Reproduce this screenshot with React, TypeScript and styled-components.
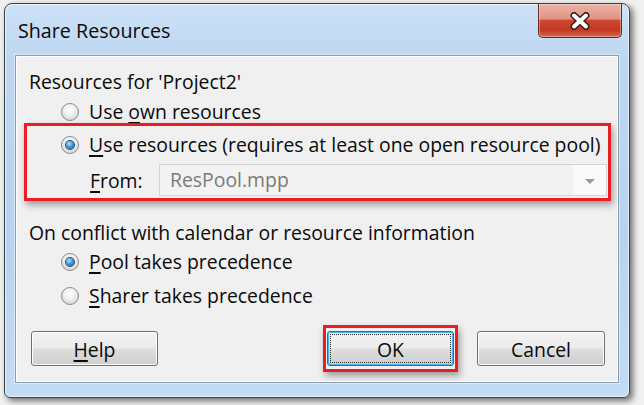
import React from "react";
import styled, { createGlobalStyle } from "styled-components";

const GlobalStyle = createGlobalStyle`
  html, body {
    margin: 0;
    padding: 0;
  }
  body {
    background: #eeeeee;
    font-family: "Open Sans", "Noto Sans", Arial, sans-serif;
  }
  #root {
    width: 644px;
    height: 405px;
    overflow: hidden;
  }
`;

const Desktop = styled.div`
  width: 644px;
  height: 405px;
  box-sizing: border-box;
  padding: 3px 0 0 4px;
  background: #f1f1f1;
`;

const Window = styled.div`
  box-sizing: border-box;
  width: 626px;
  height: 395px;
  display: flex;
  flex-direction: column;
  padding: 0 10px 14px;
  border: 1px solid #3c4146;
  border-radius: 8px 8px 6px 6px;
  background: linear-gradient(180deg, #cde2f7 0%, #bdd7f1 14%, #b8d3ef 60%, #c3dcf5 100%);
  box-shadow: inset 0 0 0 1px rgba(255, 255, 255, 0.6), 3px 3px 6px rgba(0, 0, 0, 0.55);
`;

const TitleBar = styled.div`
  display: flex;
  align-items: flex-start;
  height: 51px;
  margin: 0 -10px;
  padding: 0 7px 0 13px;
`;

const Title = styled.div`
  align-self: center;
  margin-top: 1px;
  font-size: 19.7px;
  color: #0a0a0a;
`;

const CloseButton = styled.div`
  margin-left: auto;
  width: 84px;
  height: 34px;
  box-sizing: border-box;
  display: flex;
  align-items: center;
  justify-content: center;
  border: 1px solid #6b261b;
  border-top: none;
  border-radius: 0 0 5px 5px;
  background: linear-gradient(180deg, #ebb3a6 0%, #e19484 45%, #cb472f 50%, #c13a23 80%, #d66a52 100%);
  box-shadow: inset 0 0 0 1px rgba(255, 255, 255, 0.35);
`;

const Panel = styled.div`
  flex: 1;
  display: flex;
  flex-direction: column;
  border: 1px solid #8b9db3;
  background: #f0f0f0;
  box-shadow: 0 0 0 1px rgba(255, 255, 255, 0.45), inset 0 0 0 1px #ffffff;
  padding: 15px 7px 0 8px;
  font-size: 19.4px;
  color: #0a0a0a;
`;

const GroupLabel = styled.div<{ $top?: number }>`
  height: 22px;
  line-height: 22px;
  margin-top: ${(p) => p.$top ?? 0}px;
  padding-left: 5px;
`;

const Option = styled.div<{ $top?: number; $indent?: number }>`
  display: flex;
  align-items: center;
  gap: 10px;
  height: 22px;
  line-height: 22px;
  margin-top: ${(p) => p.$top ?? 0}px;
  padding-left: ${(p) => p.$indent ?? 0}px;
  white-space: nowrap;
`;

const Radio = styled.span<{ $checked?: boolean }>`
  flex: none;
  width: 18px;
  height: 18px;
  box-sizing: border-box;
  border-radius: 50%;
  border: 1px solid #8a8c8c;
  background: radial-gradient(circle at 50% 35%, #ffffff 0%, #eeeeee 45%, #c8c8c8 100%);
  display: flex;
  align-items: center;
  justify-content: center;

  &::after {
    content: "";
    display: ${(p) => (p.$checked ? "block" : "none")};
    width: 8px;
    height: 8px;
    border-radius: 50%;
    background: radial-gradient(circle at 40% 35%, #b4e6ff 0%, #3f95dc 45%, #0c4c91 100%);
    box-shadow: 0 0 0 1px #23476d;
  }
`;

const Key = styled.u`
  text-decoration-thickness: 1.5px;
  text-underline-offset: 3px;
`;

const Callout = styled.div`
  border: 3px solid #ec1c24;
  box-shadow: 2px 4px 7px rgba(0, 0, 0, 0.35);
  padding: 8px 1px 2px 34px;
`;

const FromRow = styled.div`
  display: flex;
  align-items: center;
  margin-top: 8px;
  padding-left: 29px;
`;

const FromLabel = styled.span`
  width: 69px;
`;

const Combo = styled.div`
  flex: 1;
  display: flex;
  height: 32px;
  box-sizing: border-box;
  border: 1px solid #d4d4d4;
  background: #f3f3f3;
`;

const ComboText = styled.span`
  flex: 1;
  padding-left: 10px;
  line-height: 30px;
  color: #7a7a7a;
`;

const ComboButton = styled.span`
  width: 32px;
  display: flex;
  align-items: center;
  justify-content: center;
  background: #fafafa;

  &::after {
    content: "";
    border-left: 5px solid transparent;
    border-right: 5px solid transparent;
    border-top: 5px solid #9a9a9a;
    margin-top: 2px;
  }
`;

const ButtonRow = styled.div`
  display: flex;
  align-items: center;
  margin-top: 18px;
  padding: 0 6px 0 7px;
`;

const PushButton = styled.div<{ $width?: number; $default?: boolean }>`
  width: ${(p) => p.$width ?? 127}px;
  height: 35px;
  box-sizing: border-box;
  display: flex;
  align-items: center;
  justify-content: center;
  padding-top: 2px;
  border: 1px solid ${(p) => (p.$default ? "#2f6f9f" : "#707070")};
  border-radius: 3px;
  background: linear-gradient(180deg, #f3f3f3 0%, #ebebeb 48%, #dddddd 52%, #cfcfcf 100%);
  box-shadow: inset 0 0 0 1px ${(p) => (p.$default ? "#4fb0ea" : "#fbfbfb")};
  outline: ${(p) => (p.$default ? "1px dotted #2a2a2a" : "none")};
  outline-offset: -4px;
`;

const OkCallout = styled.div`
  margin-left: auto;
  border: 3px solid #ec1c24;
  padding: 3px 1px;
  box-shadow: 2px 4px 7px rgba(0, 0, 0, 0.35);
`;

const CancelSlot = styled.div`
  margin-left: 19px;
`;

function CloseGlyph() {
  return (
    <svg width="24" height="18" viewBox="0 0 24 18">
      <path d="M6 3.5 L18 14.5 M18 3.5 L6 14.5" stroke="#3a1b15" strokeWidth="7" strokeLinecap="round" />
      <path d="M6 3.5 L18 14.5 M18 3.5 L6 14.5" stroke="#ffffff" strokeWidth="4" strokeLinecap="round" />
    </svg>
  );
}

export default function App() {
  return (
    <>
      <GlobalStyle />
      <Desktop>
        <Window>
          <TitleBar>
            <Title>Share Resources</Title>
            <CloseButton>
              <CloseGlyph />
            </CloseButton>
          </TitleBar>
          <Panel>
            <GroupLabel>Resources for 'Project2'</GroupLabel>
            <Option $top={8} $indent={37}>
              <Radio />
              <span>
                Use <Key>o</Key>wn resources
              </span>
            </Option>
            <Callout>
              <Option>
                <Radio $checked />
                <span>
                  <Key>U</Key>se resources (requires at least one open resource pool)
                </span>
              </Option>
              <FromRow>
                <FromLabel>
                  <Key>F</Key>rom:
                </FromLabel>
                <Combo>
                  <ComboText>ResPool.mpp</ComboText>
                  <ComboButton />
                </Combo>
              </FromRow>
            </Callout>
            <GroupLabel $top={21}>On conflict with calendar or resource information</GroupLabel>
            <Option $top={7} $indent={37}>
              <Radio $checked />
              <span>
                <Key>P</Key>ool takes precedence
              </span>
            </Option>
            <Option $top={12} $indent={37}>
              <Radio />
              <span>
                <Key>S</Key>harer takes precedence
              </span>
            </Option>
            <ButtonRow>
              <PushButton>
                <span>
                  <Key>H</Key>elp
                </span>
              </PushButton>
              <OkCallout>
                <PushButton $default>OK</PushButton>
              </OkCallout>
              <CancelSlot>
                <PushButton $width={128}>Cancel</PushButton>
              </CancelSlot>
            </ButtonRow>
          </Panel>
        </Window>
      </Desktop>
    </>
  );
}
